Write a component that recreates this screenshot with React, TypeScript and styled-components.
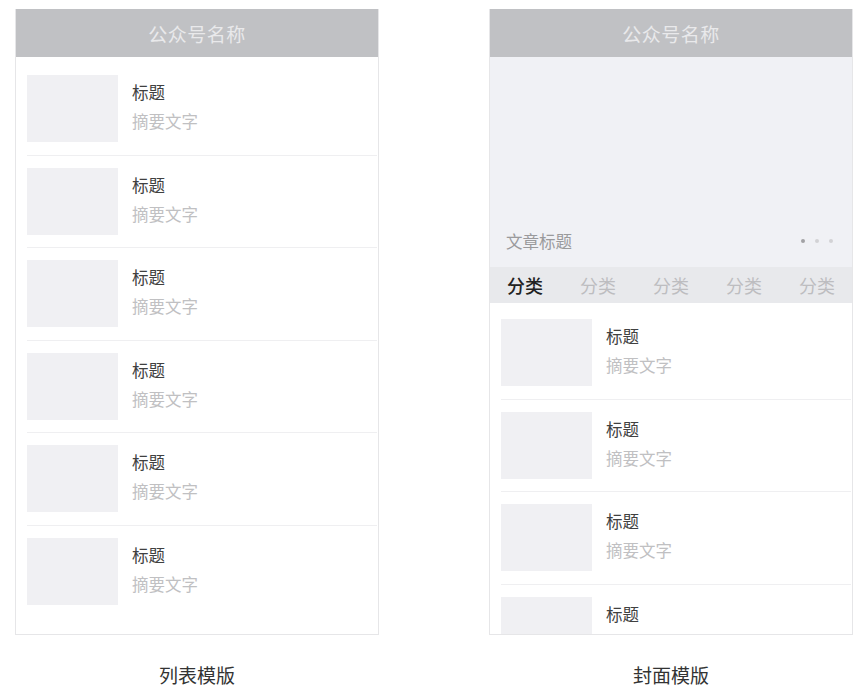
import React from 'react'
import styled, { createGlobalStyle } from 'styled-components'

const GlobalStyle = createGlobalStyle`
  html, body {
    margin: 0;
    padding: 0;
    background: #fff;
    font-family: "Noto Sans CJK SC", "Noto Sans", sans-serif;
  }
`

const Page = styled.div`
  display: flex;
  gap: 110px;
  padding: 9px 0 0 15px;
`

const Column = styled.div`
  display: flex;
  flex-direction: column;
  align-items: center;
  width: 364px;
`

const Phone = styled.div`
  box-sizing: border-box;
  width: 364px;
  height: 626px;
  border: 1px solid #e6e6e8;
  border-top: none;
  display: flex;
  flex-direction: column;
  overflow: hidden;
  background: #fff;
`

const Header = styled.div`
  flex: none;
  height: 48px;
  margin: 0 -1px;
  background: #c0c1c4;
  color: #e9e9eb;
  font-size: 19px;
  display: flex;
  align-items: center;
  justify-content: center;
  letter-spacing: 0.5px;
`

const Banner = styled.div`
  flex: none;
  height: 210px;
  background: #f0f1f5;
  display: flex;
  align-items: flex-end;
  justify-content: space-between;
  padding: 0 19px 14px 16px;
  box-sizing: border-box;
`

const BannerTitle = styled.span`
  font-size: 16.5px;
  line-height: 24px;
  color: #9a9a9c;
`

const Dots = styled.div`
  display: flex;
  gap: 10px;
  padding-bottom: 10px;
`

const Dot = styled.span<{ $active?: boolean }>`
  width: 4px;
  height: 4px;
  border-radius: 50%;
  background: ${p => (p.$active ? '#a2a2a5' : '#d2d2d5')};
`

const TabBar = styled.div`
  flex: none;
  height: 36px;
  background: #e8e9ec;
  display: flex;
  align-items: center;
  justify-content: space-between;
  padding: 0 17px 0 17px;
`

const Tab = styled.span<{ $active?: boolean }>`
  font-size: 18px;
  color: ${p => (p.$active ? '#222' : '#bdbdc0')};
  font-weight: ${p => (p.$active ? 500 : 400)};
`

const List = styled.div<{ $top: number }>`
  padding-top: ${p => p.$top}px;
`

const Row = styled.div`
  display: flex;
  margin-left: 11px;
  margin-right: 1px;
  padding: 12px 0 12.5px;
  border-bottom: 1px solid #efeff1;
  &:last-child {
    border-bottom: none;
  }
`

const Thumb = styled.div`
  flex: none;
  width: 91px;
  height: 67px;
  background: #f0f0f3;
`

const Texts = styled.div`
  display: flex;
  flex-direction: column;
  gap: 7px;
  padding: 6px 0 0 14px;
`

const Title = styled.span`
  font-size: 16.5px;
  line-height: 22px;
  color: #404040;
`

const Summary = styled.span`
  font-size: 16.5px;
  line-height: 22px;
  color: #c0c0c2;
`

const Caption = styled.div`
  margin-top: 28px;
  font-size: 19px;
  line-height: 24px;
  color: #333;
`

const ArticleRow = () => (
  <Row>
    <Thumb />
    <Texts>
      <Title>标题</Title>
      <Summary>摘要文字</Summary>
    </Texts>
  </Row>
)

const tabs = ['分类', '分类', '分类', '分类', '分类']

export default function App() {
  return (
    <>
      <GlobalStyle />
      <Page>
        <Column>
          <Phone>
            <Header>公众号名称</Header>
            <List $top={6}>
              {Array.from({ length: 6 }).map((_, i) => (
                <ArticleRow key={i} />
              ))}
            </List>
          </Phone>
          <Caption>列表模版</Caption>
        </Column>
        <Column>
          <Phone>
            <Header>公众号名称</Header>
            <Banner>
              <BannerTitle>文章标题</BannerTitle>
              <Dots>
                <Dot $active />
                <Dot />
                <Dot />
              </Dots>
            </Banner>
            <TabBar>
              {tabs.map((t, i) => (
                <Tab key={i} $active={i === 0}>
                  {t}
                </Tab>
              ))}
            </TabBar>
            <List $top={4}>
              {Array.from({ length: 4 }).map((_, i) => (
                <ArticleRow key={i} />
              ))}
            </List>
          </Phone>
          <Caption>封面模版</Caption>
        </Column>
      </Page>
    </>
  )
}
